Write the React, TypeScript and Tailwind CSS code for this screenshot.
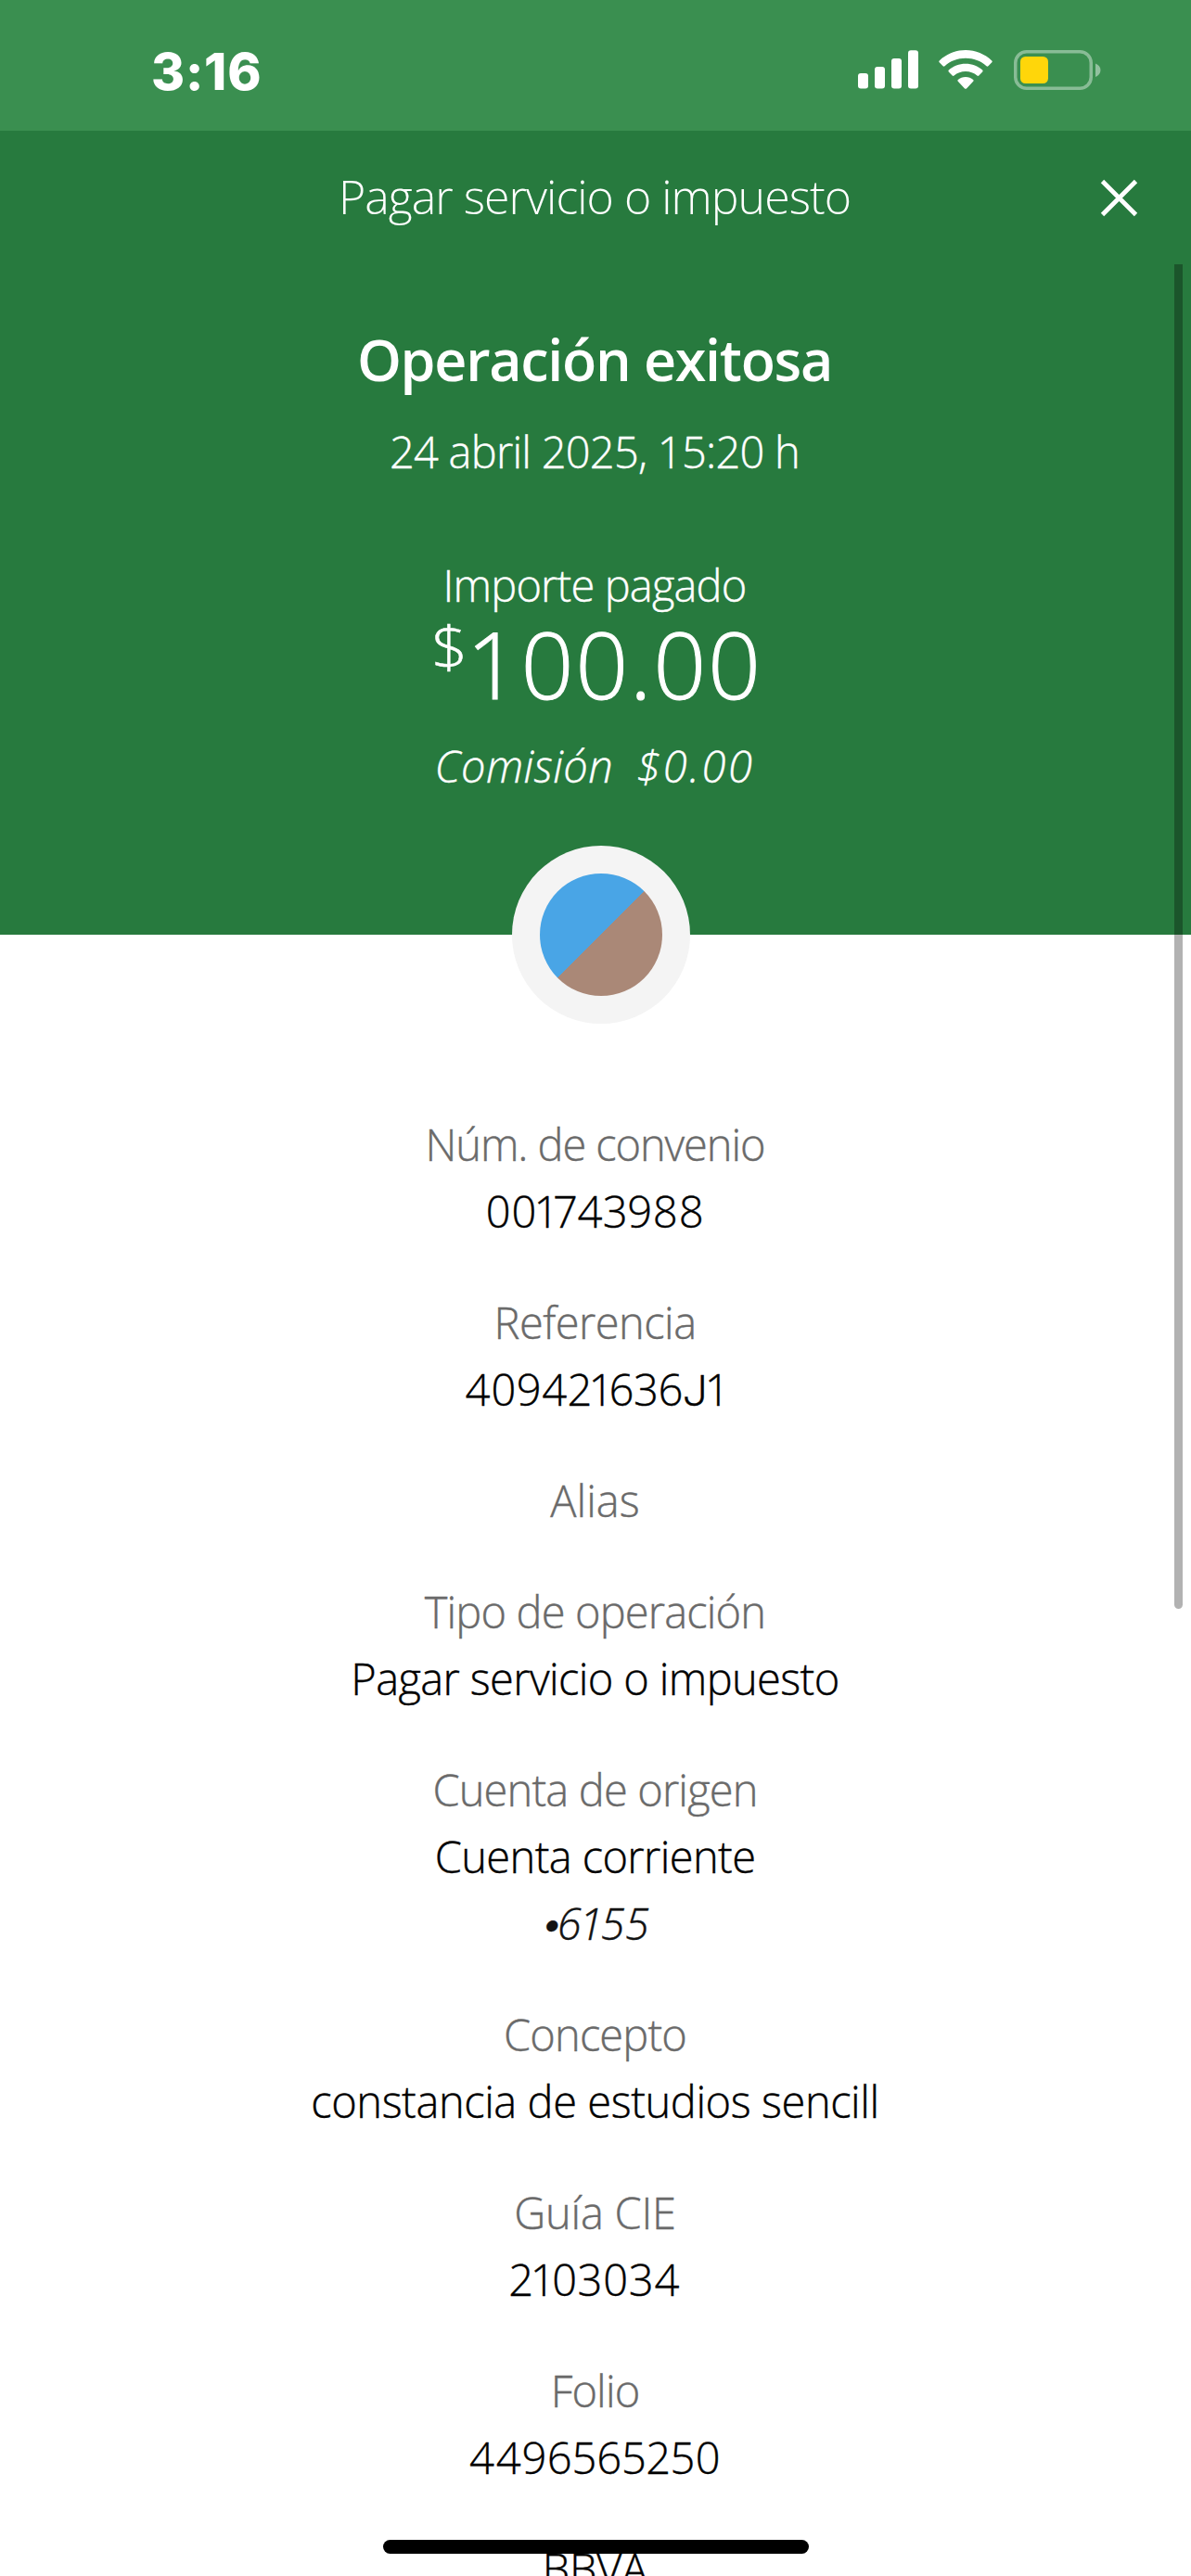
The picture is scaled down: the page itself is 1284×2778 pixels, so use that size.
import type { ReactNode } from "react";

function SignalIcon() {
  return (
    <svg className="h-[42px] w-[66px]" viewBox="0 0 66 42" fill="#fff">
      <rect x="0" y="25" width="11" height="16.5" rx="3" />
      <rect x="18" y="18" width="11" height="23.5" rx="3" />
      <rect x="36" y="9" width="11" height="32.5" rx="3" />
      <rect x="54" y="0.2" width="11" height="41.3" rx="3" />
    </svg>
  );
}

function WifiIcon() {
  return (
    <svg className="h-[42px] w-[58px]" viewBox="0 0 58 42" fill="#fff">
      <path d="M29 0C18.200 0 8.300 4.200 0.700 11.400Q-0.200 12.300 0.700 13.200L4.600 17.300Q5.600 18.200 6.500 17.300C12.600 11.700 20.400 8.800 29 8.800S45.400 11.700 51.500 17.300Q52.400 18.200 53.400 17.300L57.300 13.200Q58.200 12.300 57.300 11.400C49.700 4.200 39.800 0 29 0Z" />
      <path d="M29 14.700C22 14.700 15.700 17.300 10.800 21.600Q9.900 22.500 10.800 23.400L14.700 27.600Q15.600 28.500 16.600 27.600C20 24.700 24.300 23.100 29 23.100S38 24.700 41.400 27.600Q42.400 28.500 43.300 27.600L47.200 23.400Q48.100 22.500 47.200 21.600C42.300 17.300 36 14.700 29 14.700Z" />
      <path d="M29 29C25.800 29 23 30.100 20.800 31.900Q19.900 32.800 20.800 33.700L28 41.400Q29 42.300 30 41.400L37.200 33.700Q38.100 32.800 37.200 31.900C35 30.100 32.200 29 29 29Z" />
    </svg>
  );
}

function BatteryIcon() {
  return (
    <svg className="h-[43px] w-[95px]" viewBox="0 0 95 43" fill="none">
      <rect x="1.75" y="1.75" width="81.5" height="39.500" rx="12" stroke="#fff" strokeOpacity="0.4" strokeWidth="3.5" />
      <rect x="7" y="7" width="30" height="29" rx="5.500" fill="#ffd60a" />
      <path d="M88 14.500C91.300 15.800 93.500 18.400 93.500 21.700S91.300 27.600 88 28.900Z" fill="#fff" fillOpacity="0.45" />
    </svg>
  );
}

function StatusBar() {
  return (
    <div className="flex h-[141px] items-start justify-between bg-[#3a8f50] pr-[96px] pl-[163px]">
      <div className="mt-[43px] font-['Inter'] text-[55px] leading-[68px] font-extrabold tracking-[0.8px]">3:16</div>
      <div className="mt-[54px] flex items-start">
        <SignalIcon />
        <div className="ml-[21px]"><WifiIcon /></div>
        <div className="ml-[23px]"><BatteryIcon /></div>
      </div>
    </div>
  );
}

function NavBar() {
  return (
    <div className="relative flex h-[144px] items-center justify-center pr-[2px] pb-[3px]">
      <h1 className="text-[50px] leading-[72px] font-light tracking-[-0.97px]">Pagar servicio o impuesto</h1>
      <button className="absolute top-[52px] right-[57px]" aria-label="Cerrar">
        <svg className="size-[41px]" viewBox="0 0 41 41" stroke="#fff" strokeWidth="4.800">
          <path d="M2.500 2.500L38.500 38.500M38.500 2.500L2.500 38.500" />
        </svg>
      </button>
    </div>
  );
}

function Summary() {
  return (
    <div className="flex h-[723px] flex-col items-center pt-[61px] pr-[2px] [-webkit-text-stroke:0.4px_currentColor]">
      <h2 className="text-[61px] leading-[84px] font-semibold tracking-[-1.29px] [-webkit-text-stroke:0]">Operación exitosa</h2>
      <p className="mt-[21px] text-[47px] leading-[72px] tracking-[-0.75px]">24 abril 2025, 15:20 h</p>
      <p className="mt-[72px] text-[47px] leading-[72px] tracking-[-0.85px]">Importe pagado</p>
      <div className="flex h-[96px] items-start pl-[7px] [-webkit-text-stroke:1px_currentColor]">
        <span className="scale-x-110 text-[62px] leading-[60px] [-webkit-text-stroke:0.5px_currentColor]">$</span>
        <span className="text-[100px] leading-[96px] tracking-[1.6px]">100.00</span>
      </div>
      <div className="mt-[27px] flex gap-[25px] text-[47px] leading-[72px] italic">
        <span className="tracking-[0.5px]">Comisión</span>
        <span className="tracking-[2.6px]">$0.00</span>
      </div>
    </div>
  );
}

function Field({ label, children }: { label: ReactNode; children?: ReactNode }) {
  return (
    <div className="flex flex-col items-center">
      <dt className="text-[#6a6a6a]">{label}</dt>
      {children}
    </div>
  );
}

export default function App() {
  return (
    <div className="relative h-[2778px] w-[1284px] overflow-hidden bg-white font-['Open_Sans',sans-serif] font-light whitespace-nowrap">
      <header className="bg-[#277a3e] text-white">
        <StatusBar />
        <NavBar />
        <Summary />
      </header>

      <div className="relative -mt-[96px] flex justify-center pl-[12px]">
        <div className="flex size-[192px] items-center justify-center rounded-full bg-[#f4f4f4]">
          <div className="size-[132px] rounded-full bg-[linear-gradient(135deg,#49a5e6_50%,#aa8877_50%)]" />
        </div>
      </div>

      <dl className="mt-[94px] flex flex-col gap-[48px] pr-px text-[47px] leading-[72px] tracking-[-0.85px] text-black [-webkit-text-stroke:0.4px_currentColor]">
        <Field label={<span className="tracking-[-1.1px]">Núm. de convenio</span>}>
          <dd className="tracking-[0.6px] proportional-nums">001743988</dd>
        </Field>
        <Field label={<span className="tracking-[-0.54px]">Referencia</span>}>
          <dd className="h-[72px] tracking-[0.5px] proportional-nums">
            409421636<span className="font-['Roboto']">J</span>1
          </dd>
        </Field>
        <Field label={<span className="tracking-[0.06px]">Alias</span>} />
        <Field label="Tipo de operación">
          <dd className="tracking-[-0.62px]">Pagar servicio o impuesto</dd>
        </Field>
        <Field label="Cuenta de origen">
          <dd className="tracking-[-0.61px]">Cuenta corriente</dd>
          <dd className="flex tracking-[0.3px] text-[#121212] italic proportional-nums">
            <span className="-mr-[7px] font-['Inter'] text-[44px]">•</span>6155
          </dd>
        </Field>
        <Field label="Concepto">
          <dd className="tracking-[-0.42px]">constancia de estudios sencill</dd>
        </Field>
        <Field label={<span className="tracking-[-0.25px]">Guía CIE</span>}>
          <dd className="tracking-[1.2px] proportional-nums">2103034</dd>
        </Field>
        <Field label="Folio">
          <dd className="tracking-[0.8px] proportional-nums">4496565250</dd>
        </Field>
        <div className="text-center tracking-[-0.2px]">BBVA</div>
      </dl>

      <div className="absolute top-[285px] right-[9px] h-[1450px] w-[9px] rounded-b-full bg-black/30" />
      <div className="absolute top-[2739px] left-[413px] h-[15px] w-[459px] rounded-full bg-black" />
    </div>
  );
}
